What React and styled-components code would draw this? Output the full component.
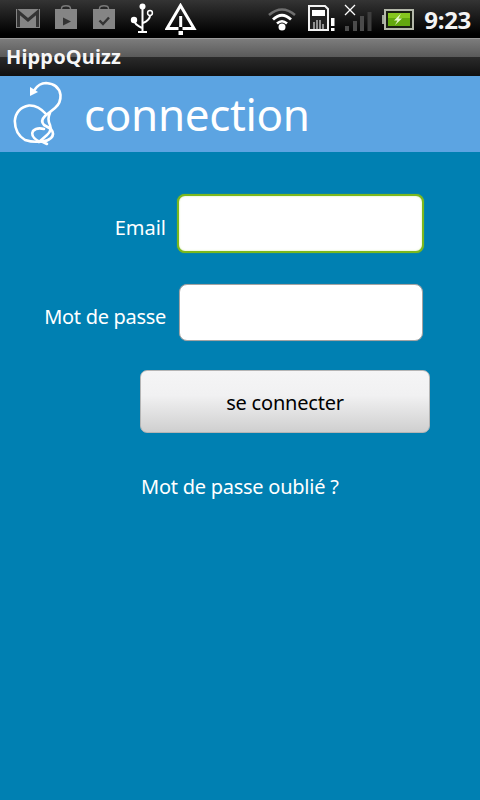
import React from "react";
import styled, { createGlobalStyle } from "styled-components";

const Global = createGlobalStyle`
  html, body { margin: 0; padding: 0; background: #0080b2; }
  * { box-sizing: border-box; }
`;
const Screen = styled.div`
  width: 480px; height: 800px; display: flex; flex-direction: column;
  background: #0080b2; font-family: "Noto Sans", "Open Sans", sans-serif; overflow: hidden;
`;
const StatusBar = styled.div`
  height: 38px; flex: none; display: flex; align-items: flex-start; justify-content: space-between;
  padding: 0 9px 0 16px;
  background: linear-gradient(#343434 0%, #1a1a1a 45%, #000 90%);
`;
const StatusGroup = styled.div`
  display: flex; align-items: flex-start;
`;
const Ico = styled.svg`display: block; flex: none; margin-top: ${p => p.$top || 0}px; margin-left: ${p => p.$ml || 0}px;`;
const LogoMark = styled.svg`display: block; flex: none;`;
const Clock = styled.div`
  margin-left: 10px; margin-top: 3px; color: #f4f4f4; font-size: 24px; font-weight: 700; line-height: 34px;
  font-family: "Noto Sans", sans-serif; letter-spacing: -0.3px;
`;
const TitleBar = styled.div`
  height: 38px; flex: none; display: flex; align-items: center; padding: 0 0 2px 6px;
  color: #f6f6f6; font-size: 20px; font-weight: 700; letter-spacing: 0.15px;
  border-top: 1px solid #9a9a9a;
  background: linear-gradient(#7c7c7c 0%, #5a5a5a 48%, #2a2a2a 50%, #101010 100%);
`;
const Header = styled.div`
  height: 76px; flex: none; display: flex; align-items: center; padding-left: 13px;
  background: #5ca4e2;
`;
const HeaderTitle = styled.h1`
  margin: 0 0 0 21px; color: #fff; font-weight: 400; font-size: 44px; line-height: 76px; letter-spacing: -0.35px;
`;
const Form = styled.div`
  display: flex; flex-direction: column; padding-top: 42px;
`;
const Row = styled.div`
  display: flex; align-items: center; margin-bottom: ${p => p.$mb}px;
`;
const Label = styled.label`
  width: 167px; padding: 7px 1px 0 0; text-align: right; color: #fff; font-size: 20px;
  letter-spacing: ${p => p.$spacing ?? -0.3}px;
`;
const Field = styled.div`
  border-radius: 8px; background: #fff;
  ${p => p.$focus
    ? "margin-left: 10px; width: 247px; height: 59px; border: 2px solid #7cb81e; box-shadow: inset 0 0 2px #cfe6a0, 0 0 1px #7cb81e;"
    : "margin-left: 12px; width: 244px; height: 57px; border: 1px solid #a3a3a3; box-shadow: 0 0 1px #5b8aa5;"}
`;
const Button = styled.button`
  margin-left: 140px; width: 290px; height: 63px; border-radius: 7px; border: 1px solid #b5b5b5;
  background: linear-gradient(#f5f5f6 0%, #f1f1f2 40%, #cfcfcf 100%);
  color: #000; font: 400 20px "Noto Sans", sans-serif; letter-spacing: -0.2px; padding: 1px 0 0;
`;
const Forgot = styled.div`
  margin-top: 39px; margin-left: 141px; color: #fff; font-size: 20px; letter-spacing: -0.25px; line-height: 30px;
`;

const Gmail = () => (
  <Ico width="24" height="19" $top="9" viewBox="0 0 24 19">
    <rect width="24" height="19" fill="#858585" />
    <path d="M2.500 18V3L12 11L21.500 3V18" fill="none" stroke="#333" strokeWidth="3" />
  </Ico>
);
const Bag = ({ children, ml }) => (
  <Ico width="22" height="24" $top="5" $ml={ml} viewBox="0 0 22 24">
    <path d="M6.500 5V3.500Q6.500 .8 11 .8T15.500 3.500V5" fill="none" stroke="#7a7a7a" strokeWidth="1.400" />
    <rect y="4" width="22" height="20" fill="#858585" />
    {children}
  </Ico>
);
const Usb = () => (
  <Ico width="24" height="30" $top="3" $ml="15" viewBox="0 0 24 30">
    <circle cx="12.500" cy="3.500" r="3" fill="#fff" />
    <path d="M12.500 3V29M8 29H17" stroke="#fff" strokeWidth="2" fill="none" />
    <circle cx="4" cy="17" r="3.200" fill="#fff" />
    <path d="M4 17Q4 21 12 25" stroke="#fff" strokeWidth="2" fill="none" />
    <circle cx="20" cy="10" r="2.400" fill="none" stroke="#fff" strokeWidth="1.500" />
    <path d="M20 12.500Q20 17 13 20" stroke="#fff" strokeWidth="2" fill="none" />
  </Ico>
);
const Warn = () => (
  <Ico width="32" height="32" $top="3" $ml="11" viewBox="0 0 32 32">
    <path d="M15.500 2.500L29 25.500H2Z" fill="none" stroke="#fff" strokeWidth="3" />
    <path d="M13.500 12H17.500V28H13.500Z" fill="#0a0a0a" />
    <rect x="14.200" y="13" width="3" height="11" fill="#fff" />
    <rect x="13.500" y="28" width="4.500" height="4" fill="#fff" />
  </Ico>
);
const Wifi = () => (
  <Ico width="32" height="26" $top="5" viewBox="0 0 32 26">
    <path d="M3 10Q16 -1 29 10" fill="none" stroke="#6f6f6f" strokeWidth="2.600" />
    <path d="M7 14.500Q16 6 25 14.500" fill="none" stroke="#fff" strokeWidth="2.800" />
    <path d="M11 18.500Q16 14 21 18.500" fill="none" stroke="#fff" strokeWidth="2.600" />
    <circle cx="16" cy="22" r="3.500" fill="#fff" />
  </Ico>
);
const Sim = () => (
  <Ico width="27" height="26" $top="5" $ml="10" viewBox="0 0 27 26">
    <path d="M1 1H17L20 4V25H1Z" fill="#222" stroke="#f2f2f2" strokeWidth="2" />
    <rect x="4" y="5" width="13" height="6" fill="#fff" />
    <path d="M6 17V24M9 15V24M12 15V24M15 19V24" stroke="#ddd" strokeWidth="1.200" />
    <rect x="23" y="13" width="3.500" height="8" fill="#fff" />
    <rect x="23" y="23" width="3.500" height="3.500" fill="#fff" />
  </Ico>
);
const Signal = () => (
  <Ico width="28" height="28" $top="3" $ml="9" viewBox="0 0 28 28">
    <path d="M1 2L11 12M11 2L1 12" stroke="#fff" strokeWidth="1.300" />
    <rect x="1" y="23" width="4" height="5" fill="#4b4b4b" />
    <rect x="9" y="18" width="4" height="10" fill="#4b4b4b" />
    <rect x="16" y="13" width="4" height="15" fill="#4b4b4b" />
    <rect x="23.500" y="9" width="4" height="19" fill="#3e3e3e" />
  </Ico>
);
const Battery = () => (
  <Ico width="32" height="21" $top="9" $ml="10" viewBox="0 0 32 21">
    <rect x="0" y="6" width="3" height="9" fill="#a0a79a" />
    <rect x="3" y="1" width="28" height="19" fill="#1a1f12" stroke="#b4b8aa" strokeWidth="2" />
    <rect x="6" y="4" width="22" height="13" fill="#63a80e" />
    <rect x="6" y="4" width="22" height="5" fill="#86c61f" />
    <path d="M19 4.500L12 11.500H15.500L13 16L20 9.500H16.500Z" fill="#e8f7cf" />
  </Ico>
);
const Logo = () => (
  <LogoMark width="50" height="66" viewBox="0 0 50 66">
    <g fill="none" stroke="#fff" strokeWidth="2.600" strokeLinecap="round" strokeLinejoin="round">
      <path d="M21.500 9Q26 2 33 2Q46 3 47.500 14Q48 22 42 27L32 35Q27 40 31 44L38 48Q42 53 38 57Q32 62 25 60Q17 55 20 50Q24 46 31 48" />
      <path d="M33 33Q25 24 16 24.500Q3 27 1.800 40Q2 53 12 59Q22 62 28 60L34 63" />
      <path d="M37 32Q34 38 37 44Q39 50 34 54L26 61" />
    </g>
    <path d="M17 6L25 11L17 15Z" fill="#fff" />
  </LogoMark>
);

export default function App() {
  return (
    <Screen>
      <Global />
      <StatusBar>
        <StatusGroup>
          <Gmail />
          <Bag ml={15}><path d="M8 12.500L16 16.500L8 20.500Z" fill="#333" /></Bag>
          <Bag ml={16}><path d="M6.500 15.500L10 19L16 12.500" fill="none" stroke="#333" strokeWidth="2.400" /></Bag>
          <Usb />
          <Warn />
        </StatusGroup>
        <StatusGroup>
          <Wifi />
          <Sim />
          <Signal />
          <Battery />
          <Clock>9:23</Clock>
        </StatusGroup>
      </StatusBar>
      <TitleBar>HippoQuizz</TitleBar>
      <Header>
        <Logo />
        <HeaderTitle>connection</HeaderTitle>
      </Header>
      <Form>
        <Row $mb={31}>
          <Label $spacing={0}>Email</Label>
          <Field $focus />
        </Row>
        <Row $mb={29}>
          <Label>Mot de passe</Label>
          <Field />
        </Row>
        <Button>se connecter</Button>
        <Forgot>Mot de passe oublié ?</Forgot>
      </Form>
    </Screen>
  );
}
